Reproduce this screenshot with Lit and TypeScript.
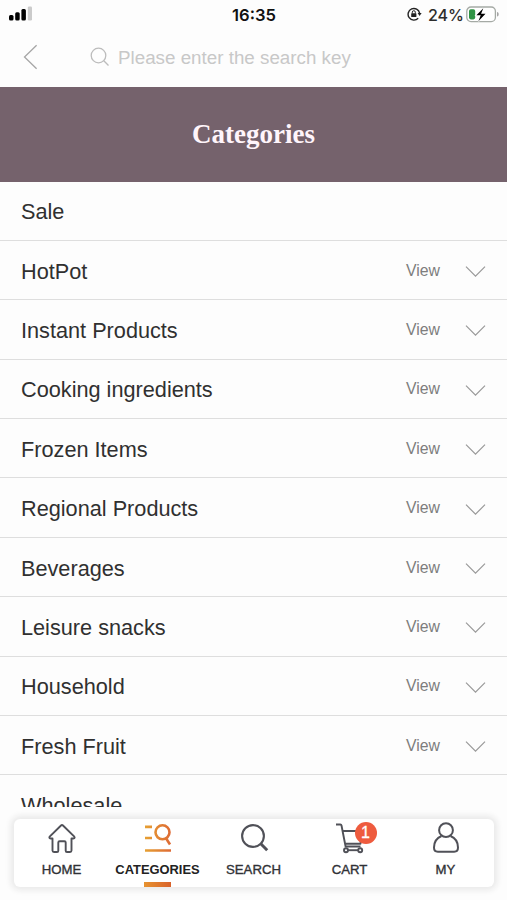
import { LitElement, html, css, svg } from "lit";
import { customElement } from "lit/decorators.js";
import { classMap } from "lit/directives/class-map.js";

const SANS = css`"Liberation Sans", Arial, sans-serif`;

@customElement("status-bar")
class StatusBar extends LitElement {
  static styles = css`
    :host { display: grid; grid-template-columns: 1fr auto 1fr; align-items: center; height: 30px; padding: 0 8px 2px 9px; box-sizing: border-box; font-family: Inter, sans-serif; color: #111; }
    svg { display: block; }
    .time { font-size: 16.6px; font-weight: 600; line-height: 20px; padding-top: 1px; }
    .right { display: flex; justify-content: flex-end; align-items: center; }
    .pct { font-size: 16px; font-weight: 500; line-height: 20px; margin: 0 2px 0 6px; padding-top: 1px; color: #2c2c2c; }
  `;
  render() {
    return html`
      <svg width="24" height="16" viewBox="0 0 24 16">
        <rect x="0" y="9" width="4.5" height="5.5" rx="1.5" fill="#000" />
        <rect x="6.2" y="6.2" width="4.5" height="8.3" rx="1.5" fill="#000" />
        <rect x="12.4" y="3" width="4.5" height="11.5" rx="1.5" fill="#000" />
        <rect x="18.8" y="0.5" width="4.2" height="14" rx="1.2" fill="#cbcbcb" />
      </svg>
      <span class="time">16:35</span>
      <div class="right">
        <svg width="15" height="14" viewBox="0 0 15 14" fill="none" stroke="#222" stroke-width="1.4">
          <path d="M11.2 11.2A5.8 5.8 0 1 1 12.6 6.2" />
          <path d="M10.6 6.1h4l-2 2.8z" fill="#222" stroke="none" />
          <rect x="4.2" y="6.2" width="5.2" height="3.9" rx=".6" fill="#222" stroke="none" />
          <path d="M5.3 6.5V5.2a1.5 1.5 0 0 1 3 0v1.3" stroke-width="1" />
        </svg>
        <span class="pct">24%</span>
        <svg width="33" height="17" viewBox="0 0 33 17">
          <rect x="0.8" y="1" width="28.6" height="14.6" rx="4.2" fill="#fff" stroke="#a5aaa5" stroke-width="1.3" />
          <path d="M31 6v4.600c1.200-.3 1.700-1.200 1.700-2.300S32.200 6.300 31 6z" fill="#a5a5a5" />
          <rect x="3" y="3.200" width="6.200" height="10.200" rx="1.800" fill="#2f9344" />
          <path d="M17.300 2.300L10.400 9.200h4.300l-2.300 6 7.100-7.400h-4.400z" fill="#000" stroke="#fff" stroke-width="1.600" paint-order="stroke" />
        </svg>
      </div>
    `;
  }
}

@customElement("search-header")
class SearchHeader extends LitElement {
  static styles = css`
    :host { display: flex; align-items: center; height: 57px; box-sizing: border-box; padding: 0 23px 4px; font-family: ${SANS}; }
    svg { display: block; flex: none; fill: none; }
    .back { margin-right: 52px; stroke: #a6a6a6; stroke-width: 1.3; }
    .lens { margin-right: 8px; stroke: #bcbcbc; stroke-width: 1.3; }
    .hint { color: #c8c8c8; font-size: 18.8px; line-height: 24px; white-space: nowrap; padding-top: 2px; }
  `;
  render() {
    return html`
      <svg class="back" width="15" height="26" viewBox="0 0 15 26"><path d="M13.600 1.200L1.500 13L13.600 24.800" /></svg>
      <svg class="lens" width="20" height="20" viewBox="0 0 20 20">
        <circle cx="8.500" cy="8.500" r="7.300" /><path d="M13.800 13.800L18.500 18.500" />
      </svg>
      <span class="hint">Please enter the search key</span>
    `;
  }
}

interface Category { name: string; expandable: boolean; }

@customElement("category-list")
class CategoryList extends LitElement {
  static properties = { items: { attribute: false } };
  declare items: Category[];
  static styles = css`
    :host { display: block; font-family: ${SANS}; }
    .row { display: flex; align-items: center; height: 59.4px; box-sizing: border-box; border-bottom: 1px solid #dedede; padding: 3px 21px 0 21px; }
    .name { flex: 1; font-size: 21.700px; line-height: 28px; color: #303030; }
    .view { font-size: 15.8px; line-height: 20px; color: #7e7e7e; margin: -2px 25px 0 0; }
    svg { display: block; fill: none; stroke: #999; stroke-width: 1.2; }
  `;
  render() {
    return html`${this.items.map(({ name, expandable }) => html`
      <div class="row">
        <span class="name">${name}</span>
        ${expandable ? html`
          <span class="view">View</span>
          <svg width="21" height="13" viewBox="0 0 21 13"><path d="M1 1.700L10.500 11.200L20 1.700" /></svg>` : ""}
      </div>`)}`;
  }
}

const icons: Record<string, unknown> = {
  HOME: svg`<path d="M4.500 16.500H2.600C1.200 16.500 1 15.300 1.900 14.400L13 3.500q1-1 2 0L26.100 14.400c.9.900.7 2.100-.7 2.100H23.500V28.500q0 1.500-1.500 1.500H19q-1.300 0-1.300-1.300V20.500q0-1.300-1.300-1.300H11.600q-1.300 0-1.300 1.300V28.700Q10.300 30 9 30H6q-1.500 0-1.500-1.500z" />`,
  CATEGORIES: svg`
    <defs><linearGradient id="glow" gradientUnits="userSpaceOnUse" x1="1" x2="27"><stop stop-color="#e6a032" /><stop offset="1" stop-color="#de6a35" /></linearGradient></defs>
    <g stroke="url(#glow)" stroke-width="2.600"><path d="M1 4.850h7M1 16.050h7M1 28.450l26 .01" /><circle cx="18.500" cy="10.300" r="7" /><path d="M22 16.300L26 22.500" /></g>`,
  SEARCH: svg`<circle cx="13" cy="14" r="10.900" stroke-width="2.100" /><path d="M20.800 21.800L27.200 28.200" stroke-width="3" />`,
  CART: svg`
    <path d="M0 2.500H4.300q1 0 1.200 1L9.600 24.500H24.500M6.500 9H26L24.500 21.700H9" />
    <circle cx="10" cy="28.200" r="2" /><circle cx="24.200" cy="28.200" r="2" /><path d="M12 28.200h10" />`,
  MY: svg`<circle cx="14" cy="8.200" r="6.900" stroke-width="2" /><path d="M9.500 14C4.800 16 2 20.500 2 25.500Q2 29.700 5.800 29.700H22.200Q26 29.700 26 25.500C26 20.500 23.200 16 18.500 14" stroke-width="2" />`,
};

@customElement("tab-bar")
class TabBar extends LitElement {
  static styles = css`
    :host { display: flex; height: 68px; box-sizing: border-box; border-radius: 6px; background: #fff; box-shadow: 0 0 6px 3px #e8e8e8; font-family: ${SANS}; }
    .tab { flex: 1; display: flex; flex-direction: column; align-items: center; position: relative; padding-top: 3px; color: #303136; }
    svg { display: block; overflow: visible; fill: none; stroke: #505158; stroke-width: 1.900; stroke-linejoin: round; }
    .label { margin-top: 8px; font-size: 13.200px; line-height: 16px; -webkit-text-stroke: 0.350px currentColor; white-space: nowrap; }
    .active .label { font-size: 12.900px; font-weight: 700; -webkit-text-stroke: 0; color: #222; }
    .active::after { content: ""; position: absolute; bottom: 0; width: 27px; height: 5px; background: linear-gradient(90deg, #e79330, #d9622b); }
    .badge { position: absolute; left: 53px; top: 3px; width: 22px; height: 22px; border-radius: 50%; background: #ee5b3e; color: #fff; font-size: 16px; line-height: 22px; text-align: center; -webkit-text-stroke: 0.300px #fff; }
  `;
  render() {
    return html`${Object.entries(icons).map(([label, icon]) => html`
      <div class=${classMap({ tab: true, active: label === "CATEGORIES" })}>
        <svg width="28" height="32" viewBox="0 0 28 32">${icon}</svg>
        <span class="label">${label}</span>
        ${label === "CART" ? html`<span class="badge">1</span>` : ""}
      </div>`)}`;
  }
}

@customElement("app-root")
class AppRoot extends LitElement {
  static styles = css`
    :host { display: flex; flex-direction: column; height: 900px; overflow: hidden; background: #fdfdfd; }
    .title { flex: none; height: 94.500px; box-sizing: border-box; padding-top: 31px; background: #75626c; color: #fff5fb; text-align: center; font: 700 27px/32px "Liberation Serif", "Times New Roman", serif; }
    .list { flex: none; height: 625px; overflow: hidden; }
    .tabs { flex: none; margin: 12.500px 13.500px 0; }
  `;
  private categories: Category[] = ["Sale", "HotPot", "Instant Products", "Cooking ingredients", "Frozen Items", "Regional Products", "Beverages", "Leisure snacks", "Household", "Fresh Fruit", "Wholesale"]
    .map((name) => ({ name, expandable: name !== "Sale" && name !== "Wholesale" }));
  render() {
    return html`
      <status-bar></status-bar>
      <search-header></search-header>
      <div class="title">Categories</div>
      <div class="list"><category-list .items=${this.categories}></category-list></div>
      <tab-bar class="tabs"></tab-bar>
    `;
  }
}
